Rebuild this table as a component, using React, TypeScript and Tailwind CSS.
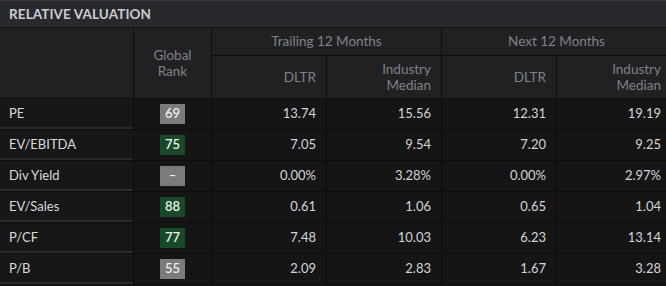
const rows = [
  { name: "PE", rank: "69", tone: "grey", t1: "13.74", t2: "15.56", n1: "12.31", n2: "19.19" },
  { name: "EV/EBITDA", rank: "75", tone: "green", t1: "7.05", t2: "9.54", n1: "7.20", n2: "9.25" },
  { name: "Div Yield", rank: "–", tone: "grey", t1: "0.00%", t2: "3.28%", n1: "0.00%", n2: "2.97%" },
  { name: "EV/Sales", rank: "88", tone: "green", t1: "0.61", t2: "1.06", n1: "0.65", n2: "1.04" },
  { name: "P/CF", rank: "77", tone: "green", t1: "7.48", t2: "10.03", n1: "6.23", n2: "13.14" },
  { name: "P/B", rank: "55", tone: "grey", t1: "2.09", t2: "2.83", n1: "1.67", n2: "3.28" },
];

const line = "border-[#0d0d0e]";

const App = () => {
  return (
    <div className="w-[666px] h-[286px] overflow-hidden bg-[#161616] font-['Lato','Open_Sans',sans-serif] text-[13px]">
      <div className="h-[28px] bg-[#29292d] border-t border-[#3a3a3e] border-b border-b-[#101012] flex items-center pl-[9px]">
        <span className="font-bold text-[13.5px] text-[#c9cdd3] tracking-[0.1px]">RELATIVE VALUATION</span>
      </div>
      <div className="w-[671px] grid grid-cols-[133px_78px_115px_115px_115px_115px]">
        {/* header */}
        <div className={`row-span-2 bg-[#212124] border-b ${line}`} />
        <div className={`row-span-2 bg-[#212124] border-l border-b ${line} flex items-center justify-center text-center text-[13.5px] leading-[16px] text-[#7e8189]`}>
          Global
          <br />
          Rank
        </div>
        <div className={`col-span-2 h-[28px] bg-[#212124] border-l border-b ${line} flex items-center justify-center text-[13.5px] text-[#7e8189]`}>
          Trailing 12 Months
        </div>
        <div className={`col-span-2 h-[28px] bg-[#212124] border-l border-b ${line} flex items-center justify-center text-[13.5px] text-[#7e8189]`}>
          Next 12 Months
        </div>
        {["DLTR", "Industry\nMedian", "DLTR", "Industry\nMedian"].map((h, i) => (
          <div
            key={i}
            className={`h-[43px] bg-[#212124] border-l border-b ${line} flex items-center justify-end pr-[10px] text-right text-[13.5px] leading-[16px] text-[#7e8189] whitespace-pre-line`}
          >
            {h}
          </div>
        ))}

        {/* rows */}
        {rows.map((r) => (
          <div key={r.name} className="contents">
            <div className={`h-[31px] border-b ${line} bg-[#171717] shadow-[inset_0_-2px_0_#2a2a2b] flex items-center pl-[9px] text-[#d8dadd]`}>
              {r.name}
            </div>
            <div className={`h-[31px] border-l border-b ${line} bg-[#151515] flex items-center justify-center`}>
              <span
                className={`w-[25px] h-[20px] flex items-center justify-center text-[#eeeeee] font-semibold ${
                  r.tone === "green" ? "bg-[#184a29]" : "bg-[#7b7b7b]"
                }`}
              >
                {r.rank}
              </span>
            </div>
            {[r.t1, r.t2, r.n1, r.n2].map((v, i) => (
              <div
                key={i}
                className={`h-[31px] border-l border-b ${line} bg-[#151515] flex items-center justify-end pr-[10px] text-[#d2d6da]`}
              >
                {v}
              </div>
            ))}
          </div>
        ))}
      </div>
    </div>
  );
};

export default App;
